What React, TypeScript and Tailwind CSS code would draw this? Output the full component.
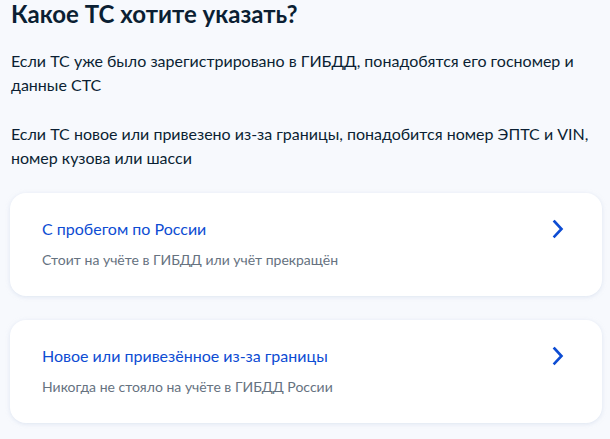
import React from "react";

interface Option {
  id: number
  title: string
  desc: string
}

const options: Option[] = [
  { id: 1, title: "С пробегом по России", desc: "Стоит на учёте в ГИБДД или учёт прекращён" },
  { id: 2, title: "Новое или привезённое из-за границы", desc: "Никогда не стояло на учёте в ГИБДД России" },
]

const Chevron = () => (
  <svg width="24" height="24" viewBox="0 0 24 24" fill="none" className="shrink-0">
    <path d="M8.5 4.5L15.5 12L8.5 19.5" stroke="#0d4cd3" strokeWidth="2.6" strokeLinecap="square" strokeLinejoin="miter" />
  </svg>
)

const App = () => {
  return (
    <div className="min-h-[439px] bg-[#f7f9fd] px-[10px] font-['Lato',sans-serif] text-[#0b1f33]">
      <h1 className="pl-px text-[24px] font-bold leading-[28px]">Какое ТС хотите указать?</h1>

      <p className="mt-[21px] pl-px text-[16px] leading-[24px]">
        Если ТС уже было зарегистрировано в ГИБДД, понадобятся его госномер и данные СТС
      </p>
      <p className="mt-[25px] pl-px text-[16px] leading-[24px]">
        Если ТС новое или привезено из-за границы, понадобится номер ЭПТС и VIN, номер кузова или шасси
      </p>

      <div className="mt-[23px] flex w-[592px] flex-col gap-6">
        {options.map(item => (
          <div
            key={item.id}
            className="flex cursor-pointer items-start justify-between rounded-2xl bg-white pl-8 pr-8 pt-6 pb-[26px] shadow-[0_1px_4px_rgba(200,212,232,0.55)]"
          >
            <div>
              <p className="text-[16px] leading-[24px] text-[#0d4cd3]">{item.title}</p>
              <p className="mt-[9px] text-[14px] leading-[20px] text-[#66727f]">{item.desc}</p>
            </div>
            <Chevron />
          </div>
        ))}
      </div>
    </div>
  )
}

export default App;
